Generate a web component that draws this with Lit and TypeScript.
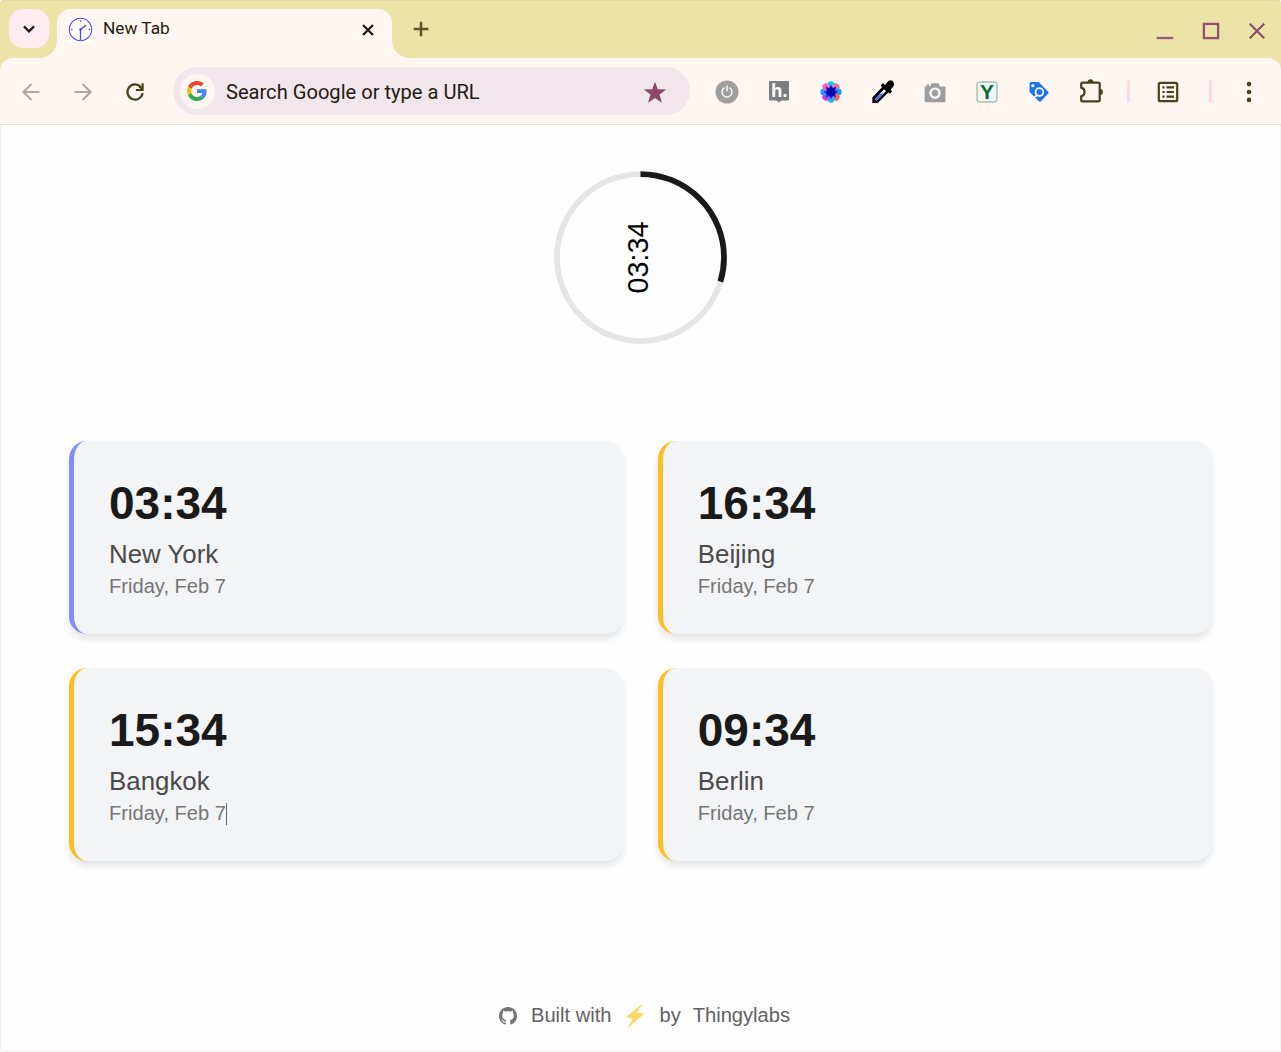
import { LitElement, html, svg, css } from "lit";
import { customElement, property } from "lit/decorators.js";
import { classMap } from "lit/directives/class-map.js";

const icon = (body: unknown, cls = "") =>
  html`<svg class="icon ${cls}" width="28" height="28" viewBox="-14 -14 28 28">${body}</svg>`;

const petals = [
  [0, "#12c8f5"], [45, "#fb7099"], [90, "#1a9cff"], [135, "#f4684f"],
  [180, "#19b9fb"], [225, "#c33df0"], [270, "#1f9cff"], [315, "#fb65b0"],
] as const;

const icons = {
  chevron: icon(svg`<path d="M-5-2.6 0 2.4 5-2.6" fill="none" stroke="#1e1b13" stroke-width="2.3"/>`),
  clock: html`<svg width="25" height="25" viewBox="-12.5 -12.5 25 25">
    <rect x="-12.5" y="-12.5" width="25" height="25" fill="#fff" />
    <circle r="11.2" fill="none" stroke="#5248e0" stroke-width="1.1" />
    <path d="M0 0V9.6" stroke="#5248e0" stroke-width="1.3" />
    <path d="M0 0 5.5-4.4" stroke="#5248e0" stroke-width="1.4" />
    <circle r="1.2" fill="#4137d8" />
    <path d="M0-9.4v1.6M-9.6 0h1.7M8 0h1.7M-.7 9.8h1.6" stroke="#6a61e4" stroke-width="1.3" />
  </svg>`,
  tabClose: icon(svg`<path d="M-5-5 5 5M5-5-5 5" stroke="#1e1b13" stroke-width="2.3"/>`),
  plus: icon(svg`<path d="M-7.3 0H7.3M0-7.3V7.3" stroke="#5b5225" stroke-width="2.5"/>`),
  min: icon(svg`<path d="M-8.3 7H8.3" stroke="#9a5876" stroke-width="2.3"/>`),
  max: icon(svg`<rect x="-7.1" y="-7.1" width="14.2" height="14.2" fill="none" stroke="#96506f" stroke-width="2.3"/>`),
  close: icon(svg`<path d="M-7.2-7.2 7.2 7.2M7.2-7.2-7.2 7.2" stroke="#8b4867" stroke-width="2"/>`),
  back: icon(svg`<path d="M8.5 0H-7.5M.5-8-7.6 0 .5 8" fill="none" stroke="#b0a69f" stroke-width="2.1"/>`),
  forward: icon(svg`<path d="M-8.5 0H7.5M-.5-8 7.6 0-.5 8" fill="none" stroke="#b0a69f" stroke-width="2.1"/>`),
  reload: icon(svg`<path d="M7.6 1.2A7.6 7.6 0 1 1 5.8-5" fill="none" stroke="#48421b" stroke-width="2.2"/><path d="M7.6-8.8V-2H.9" fill="none" stroke="#48421b" stroke-width="2.2"/><path d="M4-6 7-3" stroke="#48421b" stroke-width="2"/>`),
  google: html`<svg width="20" height="20" viewBox="0 0 48 48">
    <path fill="#EA4335" d="M24 9.5c3.54 0 6.71 1.22 9.21 3.6l6.85-6.85C35.9 2.38 30.47 0 24 0 14.62 0 6.51 5.38 2.56 13.22l7.98 6.19C12.43 13.72 17.74 9.5 24 9.5z" />
    <path fill="#4285F4" d="M46.98 24.55c0-1.57-.15-3.09-.38-4.55H24v9.02h12.94c-.58 2.96-2.26 5.48-4.78 7.18l7.73 6c4.51-4.18 7.09-10.36 7.09-17.65z" />
    <path fill="#FBBC05" d="M10.53 28.59c-.48-1.45-.76-2.99-.76-4.59s.27-3.14.76-4.59l-7.98-6.19C.92 16.46 0 20.12 0 24s.92 7.54 2.56 10.78l7.97-6.19z" />
    <path fill="#34A853" d="M24 48c6.48 0 11.93-2.13 15.89-5.81l-7.73-6c-2.15 1.45-4.92 2.3-8.16 2.3-6.26 0-11.57-4.22-13.47-9.91l-7.98 6.19C6.51 42.62 14.62 48 24 48z" />
  </svg>`,
  star: icon(svg`<path d="M0-10.3 2.8-2.7 11.2-2.5 4.5 2.6 6.9 10.7 0 5.9-6.9 10.7-4.5 2.6-11.2-2.5-2.8-2.7Z" fill="#8b4867"/>`),
  power: icon(svg`<circle r="11.5" fill="#9e9e9e"/><path d="M-2.4-4.4A5 5 0 1 0 2.4-4.4M0-6.4V-.8" fill="none" stroke="#fff" stroke-width="1.4"/>`),
  hypothesis: icon(svg`<path d="M-9-11H9a1 1 0 0 1 1 1V7.6a1 1 0 0 1-1 1H2.4L0 10.6-2.4 8.6H-9a1 1 0 0 1-1-1V-10a1 1 0 0 1 1-1Z" fill="#7d7d7d"/><text x="-8" y="4.8" class="h">h.</text>`),
  flower: icon(svg`${petals.map(([a, c]) => svg`<circle cy="-7.1" r="3.6" fill=${c} transform="rotate(${a})"/>`)}
    <path d="M0-7.2 1.9-4 5.6-5.6 4-1.9 7.2 0 4 1.9 5.6 5.6 1.9 4 0 7.2-1.9 4-5.6 5.6-4 1.9-7.2 0-4-1.9-5.6-5.6-1.9-4Z" fill="#1a22e6"/><path d="M0-6 1.6-3.2 5-5 3.6-1.4 4.4 2 0 4.6-4.4 2-3.6-1.4-5-5-1.6-3.2Z" fill="#0b06a8"/>`),
  dropper: icon(svg`<path d="M-10.7 11V5.4L.6-6.4 6.4-.8-5.2 11Z" fill="#000"/><path d="M-8.2 7.2 1-2.8 3-.8-6.6 9Z" fill="#fff"/><path d="M-8.2 7.2-3.6 2.2 1.6.6-6.6 9Z" fill="#4a68dc"/><path d="M-2.3-6.5-.2-8.7 2.1-7 4-9.4Q6.6-12.6 9.4-11.2 12.2-8.4 10.2-5.2L7.6-2.6 9-.6 6.9 1.8Z" fill="#000"/>`),
  camera: icon(svg`<path d="M-10.4-5.6H-8.6V-7.5H-5.8V-5.6H-5L-3.4-8.8H3.4L5-5.6H9.2a1.3 1.3 0 0 1 1.3 1.3V9a1.3 1.3 0 0 1-1.3 1.3H-9.1A1.3 1.3 0 0 1-10.4 9Z" fill="#9e9e9e"/><circle cy="1.1" r="4.6" fill="none" stroke="#fff" stroke-width="2.2"/>`),
  ybox: icon(svg`<rect x="-10" y="-10" width="20" height="20" rx="2.4" fill="#f3f4f5" stroke="#72b08b"/><text y="7.4" text-anchor="middle" class="y">Y</text>`),
  tag: icon(svg`<path d="M-8-9.9H-.4L9.2-.2a1.3 1.3 0 0 1 0 1.8L2 9.2a1.6 1.6 0 0 1-2.2 0L-9.4-.1V-8.5Q-9.4-9.9-8-9.9Z" fill="#1a73f0"/><circle cx="-6.1" cy="-6.3" r="1.6" fill="#fff6f1"/><circle cx=".4" cy=".1" r="3.9" fill="none" stroke="#fff6f1" stroke-width="1.8"/><path d="M-2.2 3.1-4.3 5.2" stroke="#fff6f1" stroke-width="1.8"/>`),
  puzzle: icon(svg`<path d="M-7.8-9.4H7.3A1.4 1.4 0 0 1 8.7-8V8A1.4 1.4 0 0 1 7.3 9.4H-8.4A1.4 1.4 0 0 1-9.8 8V4.4Q-6.4 3.6-6.4 0T-9.8-4.4V-8A1.4 1.4 0 0 1-8.4-9.4Z" fill="none" stroke="#48421b" stroke-width="2.2"/><path d="M-3.4-9.8a2.9 2.9 0 0 1 5.8 0ZM9-2.9a2.9 2.9 0 0 1 0 5.8Z" fill="#48421b"/>`),
  list: icon(svg`<rect x="-9.2" y="-9.2" width="18.4" height="18.4" rx="1.5" fill="none" stroke="#48421b" stroke-width="2.2"/><path d="M-1.5-4.6H6M-1.5 0H6M-1.5 4.6H6M-5.6-4.6h2.2M-5.6 0h2.2M-5.6 4.6h2.2" stroke="#48421b" stroke-width="2.1"/>`),
  dots: icon(svg`<g fill="#48421b"><circle cy="-7.9" r="2.3"/><circle r="2.3"/><circle cy="7.9" r="2.3"/></g>`),
  github: html`<svg width="18" height="18" viewBox="0 0 16 16"><path fill="#757575" d="M8 0C3.58 0 0 3.58 0 8c0 3.54 2.29 6.53 5.47 7.59.4.07.55-.17.55-.38 0-.19-.01-.82-.01-1.49-2.01.37-2.53-.49-2.69-.94-.09-.23-.48-.94-.82-1.13-.28-.15-.68-.52-.01-.53.63-.01 1.08.58 1.23.82.72 1.21 1.87.87 2.33.66.07-.52.28-.87.51-1.07-1.78-.2-3.64-.89-3.64-3.95 0-.87.31-1.59.82-2.15-.08-.2-.36-1.02.08-2.12 0 0 .67-.21 2.2.82.64-.18 1.32-.27 2-.27s1.36.09 2 .27c1.53-1.04 2.2-.82 2.2-.82.44 1.1.16 1.92.08 2.12.51.56.82 1.27.82 2.15 0 3.07-1.87 3.75-3.65 3.95.29.25.54.73.54 1.48 0 1.07-.01 1.93-.01 2.2 0 .21.15.46.55.38A8.01 8.01 0 0 0 16 8c0-4.42-3.58-8-8-8z" /></svg>`,
  bolt: html`<svg width="20" height="24" viewBox="0 0 20 24"><path d="M15.8.9 1.3 12.8Q.8 13.4 1.5 13.5L8.2 14.6 3.2 22.6Q3 23.6 4 23L18.6 10.4Q19.2 9.7 18.4 9.5L11.7 8.7 16.7 1.5Q16.8.3 15.8.9Z" fill="#fdd766" /></svg>`,
};

@customElement("browser-tabs")
class BrowserTabs extends LitElement {
  static styles = css`
    :host { display: flex; height: 58px; box-sizing: border-box; background: #ece3a9; border-top: 1px solid #e3daa3; padding: 8px 10.5px 0 9px; font-family: Roboto, sans-serif; }
    svg { display: block; flex: none; }
    .search { width: 40px; height: 39px; border-radius: 14px; background: #ffebf0; display: grid; place-items: center; }
    .tab { position: relative; display: flex; align-items: center; width: 335px; height: 49px; box-sizing: border-box; margin-left: 8px; padding: 0 10px 8px 11px; background: #fff6f1; border-radius: 14px 14px 0 0; }
    .tab::before, .tab::after { content: ""; position: absolute; bottom: 0; width: 17px; height: 17px; }
    .tab::before { right: 100%; background: radial-gradient(circle at 0 0, transparent 16.5px, #fff6f1 17px); }
    .tab::after { left: 100%; background: radial-gradient(circle at 100% 0, transparent 16.5px, #fff6f1 17px); }
    .title { flex: 1; margin-left: 10px; font-size: 17.25px; line-height: 20px; color: #1e1b13; padding-bottom: 3px; }
    .plus { margin: 5.5px 0 0 14.5px; }
    .window { display: flex; gap: 18px; margin: 7.5px 0 0 auto; }
  `;
  render() {
    return html`
      <div class="search">${icons.chevron}</div>
      <div class="tab">${icons.clock}<span class="title">New Tab</span>${icons.tabClose}</div>
      <div class="plus">${icons.plus}</div>
      <div class="window">${icons.min}${icons.max}${icons.close}</div>
    `;
  }
}

@customElement("browser-toolbar")
class BrowserToolbar extends LitElement {
  static styles = css`
    :host { display: block; background: #ece3a9; font-family: Roboto, sans-serif; }
    svg { display: block; flex: none; }
    .icon { margin-top: 1px; }
    .bar { display: flex; align-items: center; height: 67px; box-sizing: border-box; padding: 0 5.5px; background: #fff6f1; border-bottom: 1px solid #f0dfbf; border-radius: 13px 13px 0 0; }
    .slot { width: 51.7px; display: flex; justify-content: center; flex: none; }
    .ext { width: 51.95px; }
    .omni { display: flex; align-items: center; width: 517px; height: 48px; box-sizing: border-box; flex: none; margin: 0 11.5px 0 12.4px; padding: 0 21px 0 7px; border-radius: 24px; background: #f1e6eb; }
    .logo { display: grid; place-items: center; width: 35px; height: 35px; border-radius: 50%; background: #fff6f1; }
    .hint { flex: 1; margin-left: 11px; padding-top: 1px; font-size: 20.13px; line-height: 24px; color: #1e1b13; }
    .sep { width: 3px; height: 23px; border-radius: 2px; background: #ffd6e5; flex: none; }
    .first { margin: 0 24px 0 10.5px; }
    .second { margin: 0 23.5px 0 26.5px; }
    .h { font: bold 17.5px "Open Sans", sans-serif; fill: #fff; }
    .y { font: bold 21px "Liberation Sans", sans-serif; fill: #0b6b35; }
  `;
  render() {
    const nav = [icons.back, icons.forward, icons.reload];
    const ext = [icons.power, icons.hypothesis, icons.flower, icons.dropper, icons.camera, icons.ybox, icons.tag, icons.puzzle];
    return html`<div class="bar">
      ${nav.map((i) => html`<div class="slot">${i}</div>`)}
      <div class="omni"><div class="logo">${icons.google}</div><span class="hint">Search Google or type a URL</span>${icons.star}</div>
      ${ext.map((i) => html`<div class="slot ext">${i}</div>`)}
      <div class="sep first"></div>${icons.list}<div class="sep second"></div>${icons.dots}
    </div>`;
  }
}

@customElement("progress-clock")
class ProgressClock extends LitElement {
  static styles = css`
    :host { display: block; }
    svg { display: block; }
    circle { fill: none; stroke-width: 5.75; }
    .track { stroke: #e5e5e5; }
    .value { stroke: #1a1a1a; }
    text { font: 28.75px "Liberation Sans", sans-serif; fill: #000; text-anchor: middle; }
  `;
  @property() time = "";
  @property({ type: Number }) progress = 0;
  render() {
    return html`<svg width="173" height="173" viewBox="-86.5 -86.5 173 173">
      <circle class="track" r="83.5" />
      <circle class="value" r="83.5" pathLength="100" stroke-dasharray="${this.progress} 100" transform="rotate(-90)" />
      <text transform="rotate(-90)" x="0" y="7.5">${this.time}</text>
    </svg>`;
  }
}

@customElement("city-card")
class CityCard extends LitElement {
  static styles = css`
    :host { display: block; }
    .card { height: 193px; box-sizing: border-box; padding: 35px 35px; border-left: 5px solid #fbbf24; border-radius: 18px; background: #f3f4f6; box-shadow: 0 4.6px 7px rgba(0, 0, 0, 0.1); font-family: "Liberation Sans", Arial, sans-serif; }
    .local { border-color: #818cf8; }
    .time { font-size: 46px; line-height: 55px; font-weight: 700; color: #1a1a1a; }
    .city { margin-top: 8px; font-size: 25.87px; line-height: 31px; color: #4a4a4a; }
    .date { display: flex; align-items: center; margin-top: 4px; font-size: 20.12px; line-height: 24px; color: #757575; }
    .caret { width: 1px; height: 22px; margin: 1px 0 0 -0.3px; background: #666; }
  `;
  @property() time = "";
  @property() city = "";
  @property() date = "";
  @property({ type: Boolean }) local = false;
  @property({ type: Boolean }) caret = false;
  render() {
    return html`<div class=${classMap({ card: true, local: this.local })}>
      <div class="time">${this.time}</div>
      <div class="city">${this.city}</div>
      <div class="date">${this.date}${this.caret ? html`<span class="caret"></span>` : ""}</div>
    </div>`;
  }
}

@customElement("app-root")
class AppRoot extends LitElement {
  static styles = css`
    :host { display: block; }
    .window { display: flex; flex-direction: column; height: 1052px; background: #ece3a9; border-radius: 4px; overflow: hidden; }
    .page { flex: 1; display: flex; flex-direction: column; align-items: center; box-sizing: border-box; background: #fefefe; border: 1px solid #f1f1f1; border-top: 0; padding: 46px 68px 22.5px 68px; font-family: "Liberation Sans", Arial, sans-serif; }
    .grid { align-self: stretch; display: grid; grid-template-columns: 1fr 1fr; gap: 34px 34.5px; margin-top: 97px; }
    .footer { display: flex; align-items: center; margin-top: auto; padding-left: 8px; font-size: 20.13px; line-height: 28px; color: #616161; }
    .footer svg { display: block; margin-top: 2px; }
    .built { margin: 0 14px 0 14px; }
    .by { margin: 0 12px 0 14px; }
  `;
  render() {
    const cities = [
      { time: "03:34", city: "New York", local: true },
      { time: "16:34", city: "Beijing" },
      { time: "15:34", city: "Bangkok", caret: true },
      { time: "09:34", city: "Berlin" },
    ];
    return html`<div class="window">
      <browser-tabs></browser-tabs>
      <browser-toolbar></browser-toolbar>
      <div class="page">
        <progress-clock time="03:34" .progress=${29.7}></progress-clock>
        <div class="grid">
          ${cities.map((c) => html`<city-card .time=${c.time} .city=${c.city} date="Friday, Feb 7" ?local=${!!c.local} ?caret=${!!c.caret}></city-card>`)}
        </div>
        <div class="footer">${icons.github}<span class="built">Built with</span>${icons.bolt}<span class="by">by</span><span>Thingylabs</span></div>
      </div>
    </div>`;
  }
}
